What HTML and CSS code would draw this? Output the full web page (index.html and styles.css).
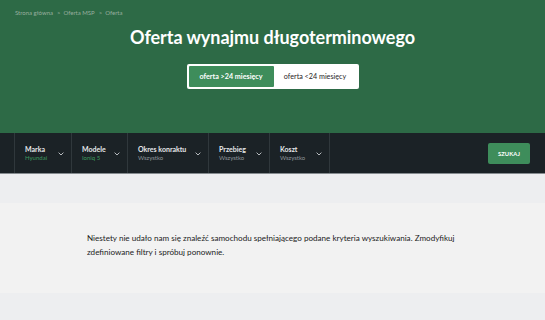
FILE: index.html
```html
<!DOCTYPE html>
<html lang="pl">
<head>
<meta charset="utf-8">
<title>Oferta wynajmu długoterminowego</title>
<link rel="stylesheet" href="styles.css">
</head>
<body>
<header class="hero">
  <nav class="crumbs">
    <a class="crumb" href="#">Strona główna</a>
    <span class="crumb-sep">&gt;</span>
    <a class="crumb" href="#">Oferta MSP</a>
    <span class="crumb-sep">&gt;</span>
    <span class="crumb">Oferta</span>
  </nav>
  <h1 class="title">Oferta wynajmu długoterminowego</h1>
  <div class="toggle">
    <button class="tab tab-active">oferta &gt;24 miesięcy</button>
    <button class="tab">oferta &lt;24 miesięcy</button>
  </div>
</header>

<section class="filters">
  <div class="filter-list">
    <div class="filter filter-marka">
      <div class="filter-text"><span class="filter-label">Marka</span><span class="filter-value filter-value-set">Hyundai</span></div>
      <svg class="chev" viewBox="0 0 6 4" width="6" height="4"><path d="M0.6 0.6 L3 3 L5.4 0.6" fill="none" stroke="#c9cdd0" stroke-width="0.9"/></svg>
    </div>
    <div class="filter filter-model">
      <div class="filter-text"><span class="filter-label">Modele</span><span class="filter-value filter-value-set">Ioniq 5</span></div>
      <svg class="chev" viewBox="0 0 6 4" width="6" height="4"><path d="M0.6 0.6 L3 3 L5.4 0.6" fill="none" stroke="#c9cdd0" stroke-width="0.9"/></svg>
    </div>
    <div class="filter filter-okres">
      <div class="filter-text"><span class="filter-label">Okres konraktu</span><span class="filter-value">Wszystko</span></div>
      <svg class="chev" viewBox="0 0 6 4" width="6" height="4"><path d="M0.6 0.6 L3 3 L5.4 0.6" fill="none" stroke="#c9cdd0" stroke-width="0.9"/></svg>
    </div>
    <div class="filter filter-przebieg">
      <div class="filter-text"><span class="filter-label">Przebieg</span><span class="filter-value">Wszystko</span></div>
      <svg class="chev" viewBox="0 0 6 4" width="6" height="4"><path d="M0.6 0.6 L3 3 L5.4 0.6" fill="none" stroke="#c9cdd0" stroke-width="0.9"/></svg>
    </div>
    <div class="filter filter-koszt">
      <div class="filter-text"><span class="filter-label">Koszt</span><span class="filter-value">Wszystko</span></div>
      <svg class="chev" viewBox="0 0 6 4" width="6" height="4"><path d="M0.6 0.6 L3 3 L5.4 0.6" fill="none" stroke="#c9cdd0" stroke-width="0.9"/></svg>
    </div>
  </div>
  <button class="search">SZUKAJ</button>
</section>

<div class="gap"></div>

<section class="empty">
  <p class="empty-text">Niestety nie udało nam się znaleźć samochodu spełniającego podane kryteria wyszukiwania. Zmodyfikuj zdefiniowane filtry i spróbuj ponownie.</p>
</section>
</body>
</html>
```

FILE: styles.css
```css
* { box-sizing: border-box; }

html, body {
  margin: 0;
  padding: 0;
}

body {
  background: #edeef0;
  font-family: Lato, "Open Sans", sans-serif;
  color: #222;
  height: 320px;
  overflow: hidden;
}

.hero {
  background: #2d6a46;
  height: 133px;
  display: flex;
  flex-direction: column;
  align-items: center;
}

.crumbs {
  align-self: flex-start;
  display: flex;
  gap: 3px;
  padding: 9px 15px 0;
  font-size: 6px;
  line-height: 8px;
  color: #98ae9f;
}

.crumb {
  color: inherit;
  text-decoration: none;
}

.crumb-sep {
  margin-left: 1px;
}

.title {
  margin: 9px 0 0;
  font-size: 18px;
  line-height: 22px;
  font-weight: 700;
  color: #fff;
  letter-spacing: -0.05px;
}

.toggle {
  margin-top: 16px;
  display: flex;
  padding: 2px;
  background: #fff;
  border-radius: 2px;
}

.tab {
  height: 21px;
  width: 83px;
  border: 0;
  border-radius: 1px;
  background: transparent;
  font-family: inherit;
  font-size: 7.2px;
  color: #1f2326;
  padding: 0;
  cursor: pointer;
}

.tab-active {
  width: 85px;
  background: #3e8d5b;
  color: #fff;
  font-weight: 700;
}

.filters {
  height: 41px;
  background: #1b2226;
  border-bottom: 1px solid #858b8f;
  display: flex;
  align-items: stretch;
  justify-content: space-between;
  padding: 0 15px 0 14px;
}

.filter-list {
  display: flex;
  border-left: 1px solid #30383c;
}

.filter {
  display: flex;
  align-items: center;
  justify-content: space-between;
  padding: 0 7px 0 10px;
  border-right: 1px solid #30383c;
}

.filter-marka { width: 57px; }
.filter-model { width: 56px; }
.filter-okres { width: 81px; }
.filter-przebieg { width: 61px; }
.filter-koszt { width: 60px; }

.filter-text {
  display: flex;
  flex-direction: column;
  gap: 1px;
}

.filter-label {
  font-size: 7px;
  line-height: 8px;
  font-weight: 700;
  color: #e6e8ea;
}

.filter-value {
  font-size: 6px;
  line-height: 7px;
  color: #8e9599;
}

.filter-value-set {
  color: #3e9a5f;
}

.chev {
  display: block;
  margin-top: 1px;
}

.search {
  align-self: center;
  width: 42px;
  height: 21px;
  border: 0;
  border-radius: 2px;
  background: #3e8d5b;
  color: #fff;
  font-family: inherit;
  font-size: 5.8px;
  font-weight: 700;
  letter-spacing: 0.1px;
  padding: 0;
}

.gap {
  height: 29px;
}

.empty {
  background: #f2f2f2;
  height: 90px;
  padding: 29px 87px 0;
}

.empty-text {
  margin: 0;
  font-size: 8.1px;
  line-height: 13.5px;
  color: #222;
}
```
